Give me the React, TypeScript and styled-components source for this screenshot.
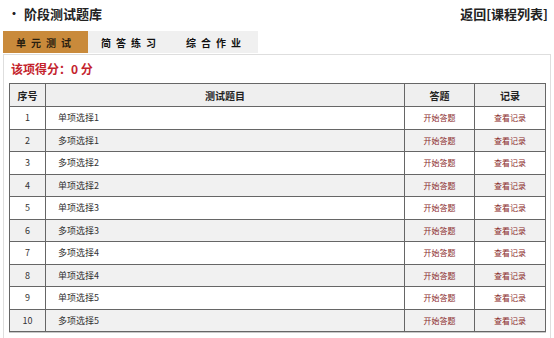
import * as React from 'react';
import styled, { createGlobalStyle } from 'styled-components';

const GlobalStyle = createGlobalStyle`
  html, body {
    margin: 0;
    padding: 0;
    background: #ffffff;
  }
  body {
    font-family: "Noto Sans CJK SC", "DejaVu Sans", sans-serif;
    color: #222;
  }
`;

const Page = styled.div`
  width: 554px;
  height: 338px;
  overflow: hidden;
  box-sizing: border-box;
`;

const TitleBar = styled.div`
  height: 31px;
  display: flex;
  align-items: center;
  justify-content: space-between;
  padding: 0 6px 3px 8px;
  box-sizing: border-box;
`;

const Title = styled.div`
  display: flex;
  align-items: center;
  gap: 4px;
  font-size: 13px;
  font-weight: bold;
  color: #222;
  line-height: 16px;
`;

const Bullet = styled.span`
  font-size: 12px;
`;

const BackLink = styled.a`
  font-size: 13px;
  font-weight: bold;
  color: #222;
  text-decoration: none;
  line-height: 16px;
`;

const Tabs = styled.div`
  display: flex;
  margin-left: 3px;
  height: 22px;
  margin-bottom: 1px;
`;

const Tab = styled.div<{ $active?: boolean }>`
  width: 85px;
  display: flex;
  align-items: center;
  justify-content: center;
  font-size: 10px;
  font-weight: bold;
  letter-spacing: 5px;
  padding-left: 1px;
  box-sizing: border-box;
  background: ${(p) => (p.$active ? '#c98a3b' : '#f0f0f0')};
  color: ${(p) => (p.$active ? '#2a2010' : '#111')};
`;

const Panel = styled.div`
  margin: 0 3px;
  border: 1px solid #dedede;
  border-bottom: none;
  padding: 7px 5px 20px 5px;
  box-sizing: border-box;
`;

const Score = styled.div`
  font-size: 12px;
  font-weight: bold;
  color: #c4232d;
  line-height: 14px;
  padding-left: 2px;
  margin-bottom: 7px;
`;

const Table = styled.table`
  width: 536px;
  border-collapse: collapse;
  table-layout: fixed;
  border: 1px solid #5f5f5f;
  box-shadow: 0 1px 0 #c8c8c8;
`;

const HeadCell = styled.th`
  height: 22px;
  background: #efefef;
  border: 1px solid #666;
  font-size: 10px;
  font-weight: bold;
  color: #222;
  padding: 0;
  text-align: center;
`;

const Row = styled.tr<{ $shade?: boolean }>`
  height: 22.5px;
  background: ${(p) => (p.$shade ? '#f1f1f1' : '#ffffff')};
`;

const Cell = styled.td<{ $align?: string }>`
  border: 1px solid #666;
  font-size: 9px;
  color: #333;
  padding: 0 0 0 ${(p) => (p.$align === 'left' ? '12px' : '0')};
  text-align: ${(p) => p.$align || 'center'};
`;

const ActionLink = styled.a`
  font-size: 8px;
  color: #8a2a2a;
  text-decoration: none;
`;

const items = [
  '单项选择1',
  '多项选择1',
  '多项选择2',
  '单项选择2',
  '单项选择3',
  '多项选择3',
  '多项选择4',
  '单项选择4',
  '单项选择5',
  '多项选择5',
];

export default function App() {
  return (
    <Page>
      <GlobalStyle />
      <TitleBar>
        <Title>
          <Bullet>•</Bullet>
          阶段测试题库
        </Title>
        <BackLink href="#">返回[课程列表]</BackLink>
      </TitleBar>
      <Tabs>
        <Tab $active>单元测试</Tab>
        <Tab>简答练习</Tab>
        <Tab>综合作业</Tab>
      </Tabs>
      <Panel>
        <Score>该项得分：0 分</Score>
        <Table>
          <colgroup>
            <col style={{ width: 36 }} />
            <col style={{ width: 359 }} />
            <col style={{ width: 70 }} />
            <col style={{ width: 71 }} />
          </colgroup>
          <thead>
            <tr>
              <HeadCell>序号</HeadCell>
              <HeadCell>测试题目</HeadCell>
              <HeadCell>答题</HeadCell>
              <HeadCell>记录</HeadCell>
            </tr>
          </thead>
          <tbody>
            {items.map((name, i) => (
              <Row key={i} $shade={i % 2 === 1}>
                <Cell>{i + 1}</Cell>
                <Cell $align="left">{name}</Cell>
                <Cell>
                  <ActionLink href="#">开始答题</ActionLink>
                </Cell>
                <Cell>
                  <ActionLink href="#">查看记录</ActionLink>
                </Cell>
              </Row>
            ))}
          </tbody>
        </Table>
      </Panel>
    </Page>
  );
}
